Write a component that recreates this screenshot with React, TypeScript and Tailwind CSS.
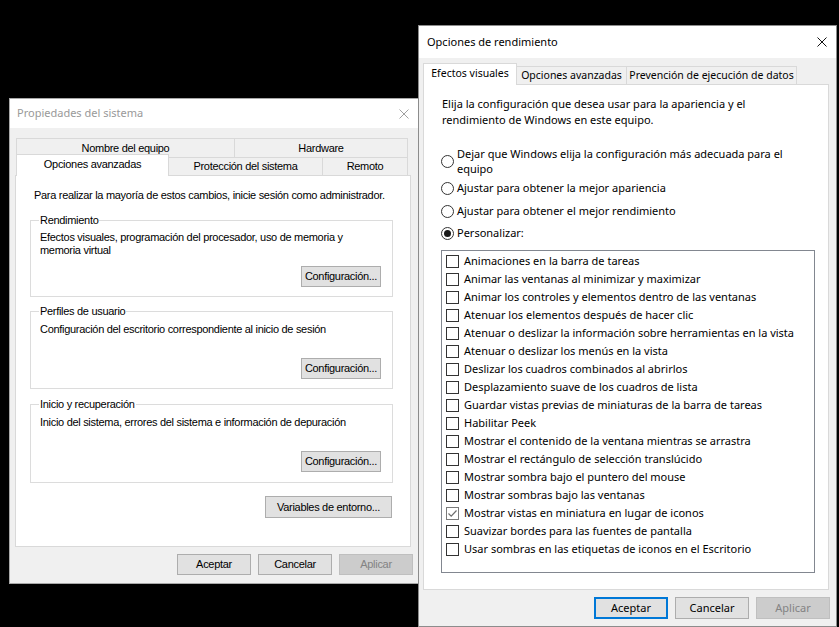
import type { ReactNode } from 'react'

const effects = [
  'Animaciones en la barra de tareas',
  'Animar las ventanas al minimizar y maximizar',
  'Animar los controles y elementos dentro de las ventanas',
  'Atenuar los elementos después de hacer clic',
  'Atenuar o deslizar la información sobre herramientas en la vista',
  'Atenuar o deslizar los menús en la vista',
  'Deslizar los cuadros combinados al abrirlos',
  'Desplazamiento suave de los cuadros de lista',
  'Guardar vistas previas de miniaturas de la barra de tareas',
  'Habilitar Peek',
  'Mostrar el contenido de la ventana mientras se arrastra',
  'Mostrar el rectángulo de selección translúcido',
  'Mostrar sombra bajo el puntero del mouse',
  'Mostrar sombras bajo las ventanas',
  'Mostrar vistas en miniatura en lugar de iconos',
  'Suavizar bordes para las fuentes de pantalla',
  'Usar sombras en las etiquetas de iconos en el Escritorio',
]

function CloseX({ color, size }: { color: string; size: number }) {
  return (
    <svg width={size} height={size} viewBox={`0 0 ${size} ${size}`} className="shrink-0">
      <path d={`M0.5 0.5 L${size - 0.5} ${size - 0.5} M${size - 0.5} 0.5 L0.5 ${size - 0.5}`} stroke={color} strokeWidth="1" />
    </svg>
  )
}

function Btn({ children, className = '', disabled, focused }: { children: ReactNode; className?: string; disabled?: boolean; focused?: boolean }) {
  let look = 'bg-[#e1e1e1] border border-[#adadad] text-black'
  if (disabled) look = 'bg-[#cccccc] border border-[#bfbfbf] text-[#838383]'
  if (focused) look = 'bg-[#e1e1e1] border-2 border-[#0078d7] text-black'
  return <div className={`flex items-center justify-center shrink-0 ${look} ${className}`}>{children}</div>
}

function Group({ label, heightClass, children }: { label: string; heightClass: string; children: ReactNode }) {
  return (
    <div className={`relative border border-[#dcdcdc] flex flex-col ${heightClass}`}>
      <span className="absolute -top-[7px] left-[8px] bg-white px-[1px] leading-[13px]">{label}</span>
      {children}
    </div>
  )
}

function Radio({ checked }: { checked?: boolean }) {
  return (
    <div className="w-[13px] h-[13px] rounded-full border border-[#333333] bg-white flex items-center justify-center shrink-0">
      {checked && <div className="w-[7px] h-[7px] rounded-full bg-[#1a1a1a]" />}
    </div>
  )
}

function Check({ checked }: { checked?: boolean }) {
  return (
    <div className={`w-[13px] h-[13px] border bg-white flex items-center justify-center shrink-0 ${checked ? 'border-[#7a7a7a]' : 'border-[#333333]'}`}>
      {checked && (
        <svg width="11" height="11" viewBox="0 0 11 11">
          <path d="M1.5 5.5 L4.2 8.2 L9.5 2.5" fill="none" stroke="#6e6e6e" strokeWidth="1.2" />
        </svg>
      )}
    </div>
  )
}

function SystemProperties() {
  return (
    <div className="absolute left-[9px] top-[98px] w-[410px] h-[486px] border border-[#a8a8a8] bg-[#f0f0f0] flex flex-col font-['Liberation_Sans',Arial,sans-serif] text-[11px] tracking-[-0.3px] text-black">
      <div className="h-[29px] shrink-0 bg-white flex items-center justify-between pl-[7px] pr-[9px]">
        <span className="font-['Noto_Sans',sans-serif] text-[11px] tracking-normal text-[#999999]">Propiedades del sistema</span>
        <CloseX color="#a0a0a0" size={10} />
      </div>

      <div className="mt-[10px] ml-[6px] w-[392px] shrink-0">
        <div className="flex h-[19px]">
          <div className="w-[219px] border border-b-0 border-[#d9d9d9] flex items-center justify-center">Nombre del equipo</div>
          <div className="w-[173px] border border-l-0 border-b-0 border-[#d9d9d9] flex items-center justify-center">Hardware</div>
        </div>
        <div className="flex h-[18px]">
          <div className="relative z-10 -mt-[3px] h-[22px] w-[153px] bg-white border border-b-0 border-[#d9d9d9] flex items-center justify-center pb-[2px]">Opciones avanzadas</div>
          <div className="w-[154px] border-t border-r border-[#d9d9d9] flex items-center justify-center">Protección del sistema</div>
          <div className="w-[85px] border-t border-r border-[#d9d9d9] flex items-center justify-center">Remoto</div>
        </div>
      </div>

      <div className="ml-[5px] w-[396px] h-[372px] shrink-0 border border-[#d9d9d9] bg-white flex flex-col">
        <p className="mt-[13px] ml-[18px] leading-[13px]">Para realizar la mayoría de estos cambios, inicie sesión como administrador.</p>
        <div className="ml-[14px] w-[363px] flex flex-col">
          <div className="mt-[18px]">
            <Group label="Rendimiento" heightClass="h-[77px]">
              <p className="mt-[10px] ml-[9px] leading-[13px]">
                Efectos visuales, programación del procesador, uso de memoria y<br />memoria virtual
              </p>
              <Btn className="mt-auto mb-[9px] mr-[11px] self-end w-[80px] h-[21px]">Configuración...</Btn>
            </Group>
          </div>
          <div className="mt-[14px]">
            <Group label="Perfiles de usuario" heightClass="h-[78px]">
              <p className="mt-[11px] ml-[9px] leading-[13px]">Configuración del escritorio correspondiente al inicio de sesión</p>
              <Btn className="mt-auto mb-[9px] mr-[11px] self-end w-[80px] h-[21px]">Configuración...</Btn>
            </Group>
          </div>
          <div className="mt-[15px]">
            <Group label="Inicio y recuperación" heightClass="h-[79px]">
              <p className="mt-[11px] ml-[9px] leading-[13px]">Inicio del sistema, errores del sistema e información de depuración</p>
              <Btn className="mt-auto mb-[10px] mr-[11px] self-end w-[80px] h-[21px]">Configuración...</Btn>
            </Group>
          </div>
          <Btn className="mt-[13px] mr-[1px] self-end w-[127px] h-[22px]">Variables de entorno...</Btn>
        </div>
      </div>

      <div className="mt-[7px] flex justify-end gap-[7px] pr-[5px]">
        <Btn className="w-[74px] h-[21px]">Aceptar</Btn>
        <Btn className="w-[74px] h-[21px]">Cancelar</Btn>
        <Btn className="w-[74px] h-[21px]" disabled>Aplicar</Btn>
      </div>
    </div>
  )
}

function PerformanceOptions() {
  return (
    <div className="absolute left-[418px] top-[25px] w-[419px] h-[602px] border border-[#8c8c8c] bg-[#f0f0f0] flex flex-col font-['Noto_Sans',sans-serif] text-[11px] text-black">
      <div className="h-[32px] shrink-0 bg-white flex items-center justify-between pl-[8px] pr-[9px]">
        <span className="text-[11px]">Opciones de rendimiento</span>
        <CloseX color="#111111" size={10} />
      </div>

      <div className="mt-[8px] ml-[4px] flex h-[18px] shrink-0 text-[10.5px]">
        <div className="relative z-10 -mt-[3px] h-[22px] w-[94px] bg-white border border-b-0 border-[#d9d9d9] flex items-center justify-center pb-[2px]">Efectos visuales</div>
        <div className="w-[110px] border-t border-r border-[#d9d9d9] flex items-center justify-center">Opciones avanzadas</div>
        <div className="w-[170px] border-t border-r border-[#d9d9d9] flex items-center justify-center">Prevención de ejecución de datos</div>
      </div>

      <div className="ml-[4px] w-[406px] h-[506px] shrink-0 border border-[#d9d9d9] bg-white flex flex-col">
        <div className="ml-[17px] flex flex-col">
          <p className="mt-[11px] ml-[1px] leading-[16px]">
            Elija la configuración que desea usar para la apariencia y el<br />rendimiento de Windows en este equipo.
          </p>
          <div className="mt-[18px] flex items-center gap-[3px]">
            <Radio />
            <span className="leading-[15px]">
              Dejar que Windows elija la configuración más adecuada para el<br />equipo
            </span>
          </div>
          <div className="mt-[5px] flex items-center gap-[3px] h-[15px]">
            <Radio />
            <span>Ajustar para obtener la mejor apariencia</span>
          </div>
          <div className="mt-[8px] flex items-center gap-[3px] h-[15px]">
            <Radio />
            <span>Ajustar para obtener el mejor rendimiento</span>
          </div>
          <div className="mt-[7px] flex items-center gap-[3px] h-[15px]">
            <Radio checked />
            <span>Personalizar:</span>
          </div>
          <div className="mt-[9px] w-[374px] h-[323px] border border-[#828790] bg-white flex flex-col pt-[1px]">
            {effects.map((e, i) => (
              <div key={e} className="h-[18px] shrink-0 flex items-center pl-[4px] gap-[5px]">
                <Check checked={i === 14} />
                <span>{e}</span>
              </div>
            ))}
          </div>
        </div>
      </div>

      <div className="mt-[7px] flex justify-end gap-[7px] pr-[6px]">
        <Btn className="w-[74px] h-[22px]" focused>Aceptar</Btn>
        <Btn className="w-[74px] h-[22px]">Cancelar</Btn>
        <Btn className="w-[74px] h-[22px]" disabled>Aplicar</Btn>
      </div>
    </div>
  )
}

export default function App() {
  return (
    <div className="relative w-[839px] h-[627px] bg-black overflow-hidden">
      <SystemProperties />
      <PerformanceOptions />
    </div>
  )
}
